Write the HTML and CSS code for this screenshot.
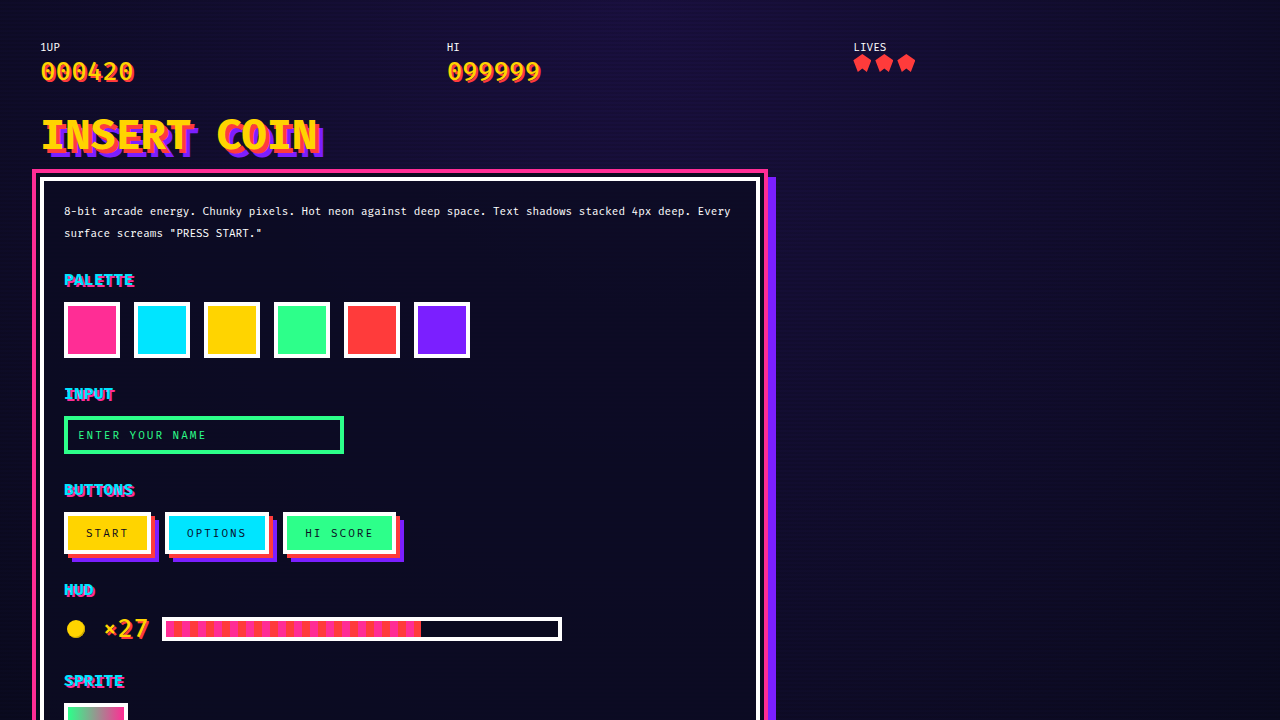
FILE: index.html
```html
<!DOCTYPE html>
<html lang="en">
<head>
  <meta charset="UTF-8" />
  <meta name="viewport" content="width=device-width, initial-scale=1.0" />
  <title>Insert Coin</title>
  <link rel="stylesheet" href="styles.css">
</head>
<body>
  <header class="hud-top">
    <div>
      <div class="hud-label">1UP</div>
      <div class="hud-score">000420</div>
    </div>
    <div>
      <div class="hud-label">HI</div>
      <div class="hud-score">099999</div>
    </div>
    <div>
      <div class="hud-label">LIVES</div>
      <div class="lives">
        <span class="life"></span>
        <span class="life"></span>
        <span class="life"></span>
      </div>
    </div>
  </header>

  <h1>INSERT COIN</h1>

  <main class="panel">
    <p class="intro">8-bit arcade energy. Chunky pixels. Hot neon against deep space. Text shadows stacked 4px deep. Every surface screams "PRESS START."</p>

    <h2>PALETTE</h2>
    <div class="swatches">
      <div class="swatch pink"></div>
      <div class="swatch cyan"></div>
      <div class="swatch yellow"></div>
      <div class="swatch green"></div>
      <div class="swatch red"></div>
      <div class="swatch purple"></div>
    </div>

    <h2>INPUT</h2>
    <input class="name-input" type="text" placeholder="ENTER YOUR NAME" />

    <h2>BUTTONS</h2>
    <div class="buttons">
      <button class="yellow">START</button>
      <button class="cyan">OPTIONS</button>
      <button class="green">HI SCORE</button>
    </div>

    <h2>HUD</h2>
    <div class="hud-row">
      <span class="coin"></span>
      <span class="coin-count">×27</span>
      <div class="bar"><div class="bar-fill" style="width: 65%"></div></div>
    </div>

    <h2>SPRITE</h2>
    <div class="sprite"></div>
  </main>
</body>
</html>
```

FILE: styles.css
```css
* {
  box-sizing: border-box;
  margin: 0;
  padding: 0;
}

html, body {
  height: 720px;
  overflow: hidden;
}

body {
  background:
    repeating-linear-gradient(0deg, transparent 0, transparent 2px, rgba(0, 0, 0, 0.1) 2px, rgba(0, 0, 0, 0.1) 4px),
    radial-gradient(ellipse at 50% 0%, #1a1040 0%, #0a0a1f 100%);
  background-color: #0a0a1f;
  color: #fff;
  font-family: "Fira Mono", "Noto Sans Mono", monospace;
  padding: 40px;
}

.hud-top {
  display: grid;
  grid-template-columns: repeat(3, 1fr);
  gap: 20px;
  margin-bottom: 24px;
}

.hud-label {
  font-size: 11px;
  line-height: 15px;
}

.hud-score {
  font-size: 26px;
  font-weight: 500;
  line-height: 33px;
  color: #ffd400;
  text-shadow: 2px 2px 0 #ff3b3b;
}

.lives {
  display: flex;
  gap: 4px;
  margin-top: -1px;
}

.life {
  width: 18px;
  height: 18px;
  background: #ff3b3b;
  clip-path: polygon(50% 0, 100% 35%, 75% 100%, 50% 80%, 25% 100%, 0 35%);
}

h1 {
  font-size: 42px;
  line-height: 46px;
  color: #ffd400;
  text-shadow: 4px 4px 0 #ff3b3b, 8px 8px 0 #7b1fff;
  margin-bottom: 19px;
}

.panel {
  width: 720px;
  padding: 20px;
  border: 4px solid #fff;
  background: rgba(11, 11, 34, 0.8);
  box-shadow: 0 0 0 4px #0a0a1f, 0 0 0 8px #ff2d95, 8px 8px 0 8px #7b1fff;
}

.intro {
  font-size: 11px;
  line-height: 22px;
  margin-bottom: 27px;
}

h2 {
  font-size: 16px;
  line-height: 16px;
  letter-spacing: 0.3px;
  color: #00e5ff;
  text-shadow: 2px 2px 0 #ff2d95;
  margin-bottom: 14px;
}

.swatches {
  display: flex;
  gap: 14px;
  margin-bottom: 28px;
}

.swatch {
  width: 56px;
  height: 56px;
  border: 4px solid #fff;
}

.pink { background: #ff2d95; }
.cyan { background: #00e5ff; }
.yellow { background: #ffd400; }
.green { background: #2dff8a; }
.red { background: #ff3b3b; }
.purple { background: #7b1fff; }

.name-input {
  display: block;
  width: 280px;
  height: 38px;
  border: 4px solid #2dff8a;
  background: transparent;
  padding: 0 10px;
  font-family: "Fira Mono", "Noto Sans Mono", monospace;
  font-size: 11px;
  letter-spacing: 2px;
  color: #2dff8a;
  margin-bottom: 28px;
}

.name-input::placeholder {
  color: #2dff8a;
  opacity: 1;
}

.buttons {
  display: flex;
  gap: 14px;
  margin-bottom: 28px;
}

button {
  height: 42px;
  padding: 0 18px;
  border: 4px solid #fff;
  font-family: "Fira Mono", "Noto Sans Mono", monospace;
  font-size: 11px;
  letter-spacing: 2px;
  color: #0a0a1f;
  box-shadow: 4px 4px 0 #ff3b3b, 8px 8px 0 #7b1fff;
}

.hud-row {
  display: flex;
  align-items: center;
  gap: 14px;
  height: 24px;
  margin-top: 19px;
  margin-bottom: 32px;
}

.coin {
  width: 18px;
  height: 18px;
  margin: 0 3px;
  border-radius: 50%;
  background: #ffd400;
  box-shadow: inset -1px -1px 0 #c9a600;
}

.coin-count {
  width: 46px;
  font-size: 26px;
  font-weight: 500;
  line-height: 24px;
  color: #ffd400;
  text-shadow: 2px 2px 0 #ff3b3b;
}

.bar {
  width: 400px;
  height: 24px;
  border: 4px solid #fff;
  background: #0a0a1f;
}

.bar-fill {
  height: 100%;
  background: repeating-linear-gradient(90deg, #ff2d95 0, #ff2d95 8px, #ff3b3b 8px, #ff3b3b 16px);
}

.sprite {
  width: 64px;
  height: 64px;
  border: 4px solid #fff;
  background: linear-gradient(90deg, #2dff8a, #ff2d95);
}
```
